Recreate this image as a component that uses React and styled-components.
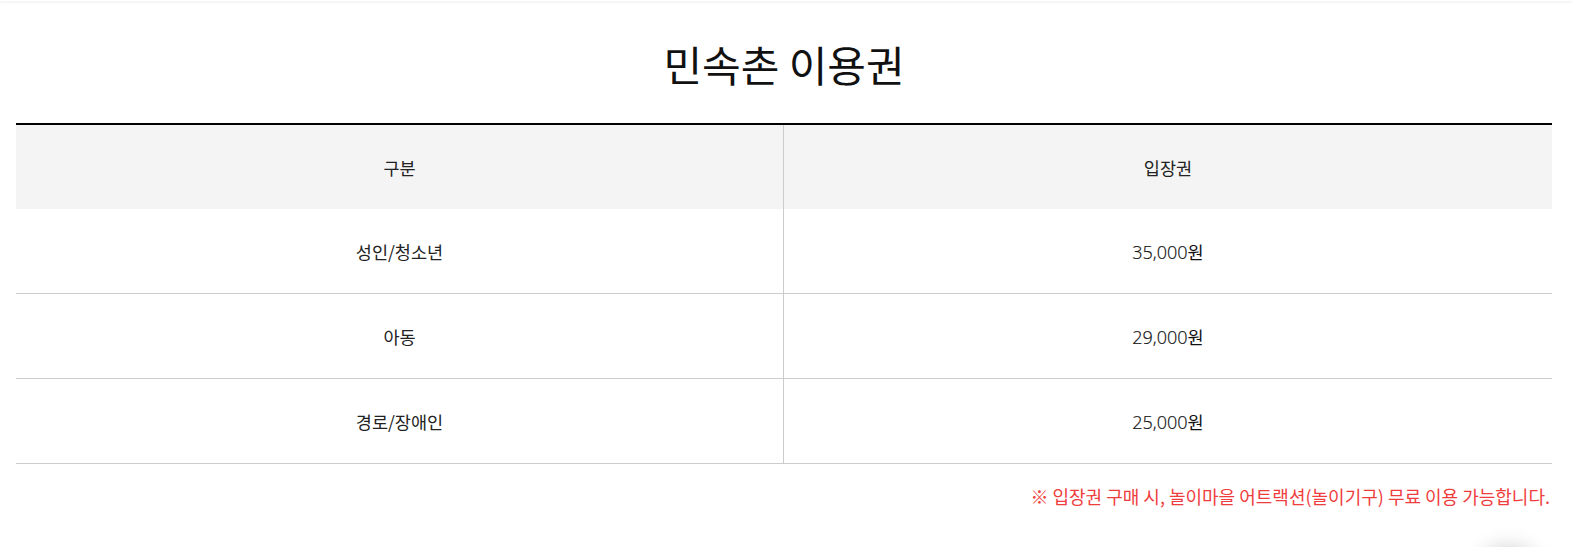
import React from "react";
import styled, { createGlobalStyle } from "styled-components";

const Global = createGlobalStyle`
  html, body { margin: 0; padding: 0; background: #fff; }
  body {
    font-family: "Noto Sans CJK KR", "Noto Sans", sans-serif;
    color: #222;
    overflow: hidden;
  }
`;

const Page = styled.div`
  position: relative;
  height: 547px;
  overflow: hidden;
`;

const TopBar = styled.div`
  height: 1px;
  background: #fff;
  box-shadow: 0 1px 3px rgba(0, 0, 0, 0.14);
`;

const Section = styled.section`
  padding: 0 20px 0 16px;
`;

const Title = styled.h2`
  margin: 38px 0 34px;
  font-size: 42px;
  line-height: 50px;
  font-weight: 400;
  text-align: center;
  color: #111;
`;

const Table = styled.div`
  border-top: 2px solid #000;
`;

const Row = styled.div`
  display: grid;
  grid-template-columns: 768px 1fr;
  background: ${(p) => (p.$head ? "#f4f4f4" : "#fff")};
  border-bottom: ${(p) => (p.$head ? "none" : "1px solid #cccccc")};
`;

const Cell = styled.div`
  box-sizing: border-box;
  height: 84px;
  display: flex;
  align-items: center;
  justify-content: center;
  font-size: 17.5px;
  color: #222;
  border-right: ${(p) => (p.$first ? "1px solid #cccccc" : "none")};
`;

const Price = styled.span`
  font-family: "Open Sans", "Noto Sans CJK KR", sans-serif;
  font-size: 18px;
  font-weight: 300;
  color: #111;
  -webkit-text-stroke: 0.2px #111;
  & > b {
    font-family: "Noto Sans CJK KR", sans-serif;
    font-size: 17.5px;
    font-weight: 400;
    -webkit-text-stroke: 0;
  }
`;

const Note = styled.p`
  margin: 20px 2px 0 0;
  text-align: right;
  font-size: 18px;
  line-height: 24px;
  color: #ef3d3d;
`;

const FloatButton = styled.div`
  position: absolute;
  left: 1478px;
  top: 548px;
  width: 62px;
  height: 62px;
  border-radius: 50%;
  background: #fff;
  box-shadow: 0 0 22px rgba(0, 0, 0, 0.22);
`;

const rows = [
  { label: "성인/청소년", price: "35,000" },
  { label: "아동", price: "29,000" },
  { label: "경로/장애인", price: "25,000" },
];

export default function App() {
  return (
    <Page>
      <Global />
      <TopBar />
      <Section>
        <Title>민속촌 이용권</Title>
        <Table>
          <Row $head>
            <Cell $first>구분</Cell>
            <Cell>입장권</Cell>
          </Row>
          {rows.map((r) => (
            <Row key={r.label}>
              <Cell $first>{r.label}</Cell>
              <Cell>
                <Price>
                  {r.price}
                  <b>원</b>
                </Price>
              </Cell>
            </Row>
          ))}
        </Table>
        <Note>※ 입장권 구매 시, 놀이마을 어트랙션(놀이기구) 무료 이용 가능합니다.</Note>
      </Section>
      <FloatButton />
    </Page>
  );
}
